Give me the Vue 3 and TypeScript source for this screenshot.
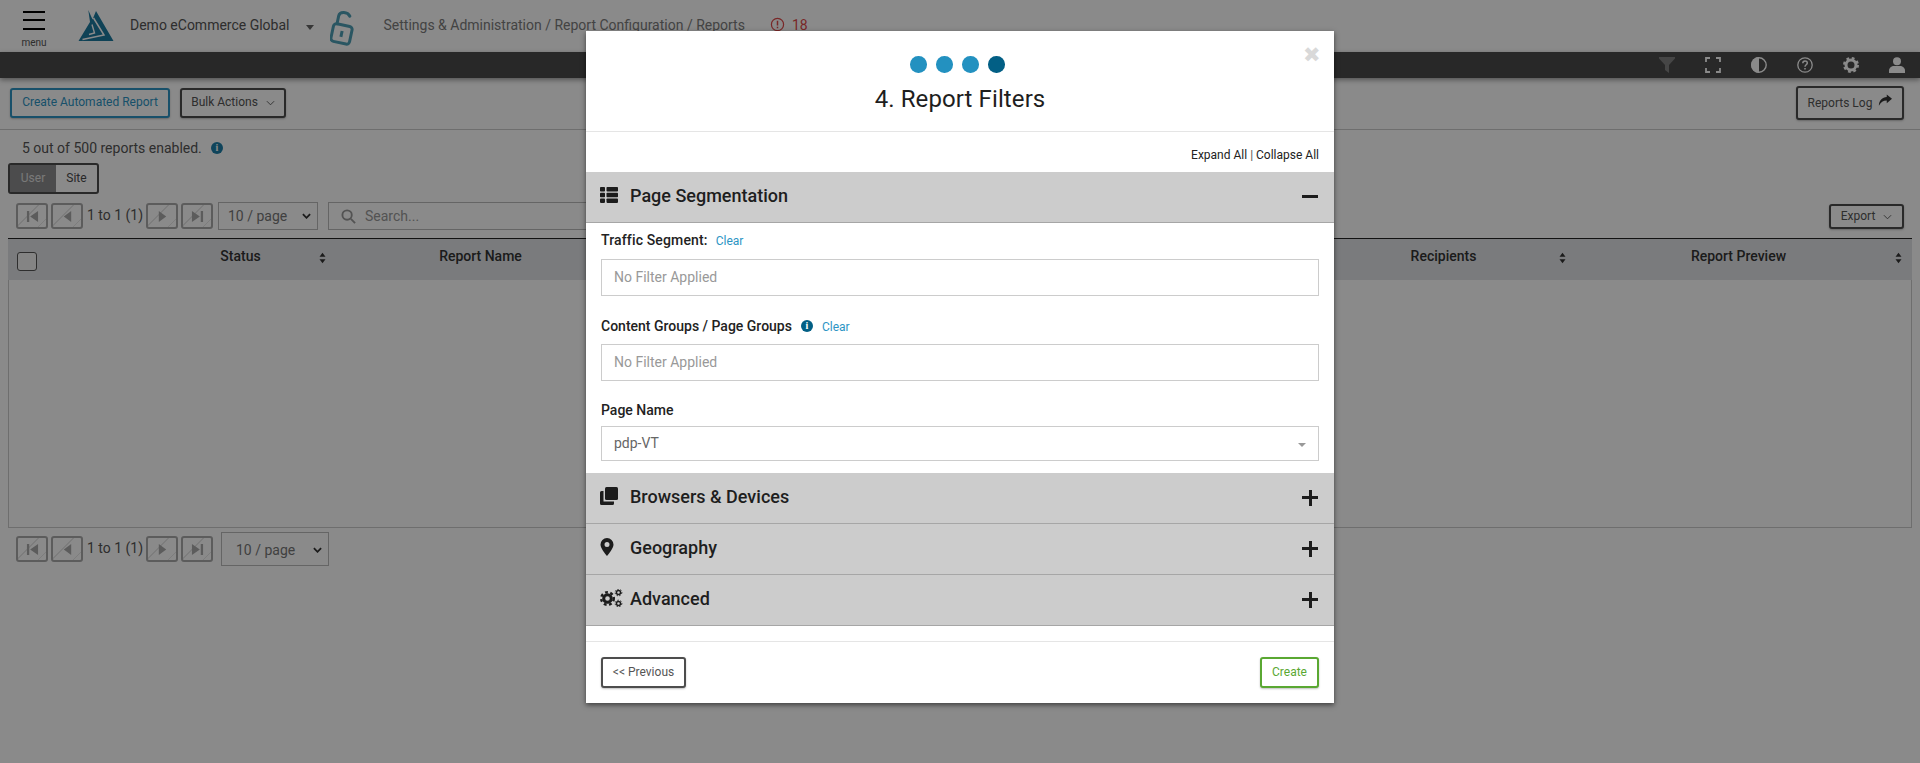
<script setup lang="ts">
interface Section {
  title: string
  icon: string
}

const steps: number[] = [1, 2, 3, 4]
const collapsed: Section[] = [
  { title: 'Browsers & Devices', icon: 'copy' },
  { title: 'Geography', icon: 'pin' },
  { title: 'Advanced', icon: 'cogs' },
]
</script>

<template>
  <div class="page">
    <header class="top">
      <div class="menu">
        <span class="bars"><i></i><i></i><i></i></span>
        <span class="menu-label">menu</span>
      </div>
      <svg class="logo" viewBox="78 10 36 33">
        <path fill="#1c7aa0" d="M88.300 11 92.500 20.500 96 12 113.500 42H78.500L90 23Z" />
        <path fill="none" stroke="#fff" stroke-width="1.500" d="M82.500 40.500 104 36 93.500 19" />
        <path fill="none" stroke="#fff" stroke-width="1.400" d="M92 25.500 94.500 34 89 35.500" />
      </svg>
      <span class="account">Demo eCommerce Global</span>
      <span class="caret"></span>
      <svg class="lock" viewBox="0 0 24 36" fill="none" stroke="#4f9fb6" stroke-width="3">
        <g transform="rotate(12 12 24)">
          <rect x="2" y="15" width="19" height="18" rx="3" />
          <path d="M5 15V7c0-5 8-6 11-2" stroke-linecap="round" />
          <path d="M11.500 21v6" />
        </g>
      </svg>
      <span class="crumbs">Settings &amp; Administration / Report Configuration / Reports</span>
      <svg class="alert" viewBox="0 0 16 16" fill="none" stroke="#e04848" stroke-width="1.300">
        <circle cx="8" cy="8" r="6.500" />
        <path d="M8 4v5M8 10.500v1.500" stroke-width="1.600" />
      </svg>
      <span class="alert-count">18</span>
    </header>

    <div class="darkbar">
      <svg class="tool tool-off" viewBox="0 0 16 16" fill="#9a9a9a"><path d="M0 0h16v1.500L10 8v8l-4-3V8L0 1.500Z" /></svg>
      <svg class="tool" viewBox="0 0 16 16" fill="none" stroke="#fff" stroke-width="1.800"><path d="M1 5V1h4M11 1h4v4M15 11v4h-4M5 15H1v-4" /></svg>
      <svg class="tool" viewBox="0 0 16 16"><circle cx="8" cy="8" r="7.200" fill="none" stroke="#fff" stroke-width="1.400" /><path fill="#fff" d="M8 0a8 8 0 0 0 0 16Z" /></svg>
      <svg class="tool" viewBox="0 0 16 16" fill="none" stroke="#fff"><circle cx="8" cy="8" r="7.200" stroke-width="1.300" /><path d="M5.800 6.200c0-3 4.500-3 4.500-.2 0 1.800-2.300 1.800-2.300 3.800M8 11v1.500" stroke-width="1.500" /></svg>
      <svg class="tool" viewBox="0 0 16 16"><circle cx="8" cy="8" r="5" fill="none" stroke="#fff" stroke-width="3" /><circle cx="8" cy="8" r="6.500" fill="none" stroke="#fff" stroke-width="3" stroke-dasharray="2.600 2.500" /></svg>
      <svg class="tool" viewBox="0 0 16 16" fill="#fff"><circle cx="8" cy="4.200" r="4" /><path d="M0 16v-2.500C0 11 2.500 9 5 9h6c2.500 0 5 2 5 4.500V16Z" /></svg>
    </div>

    <div class="toolbar">
      <button class="btn btn-blue" type="button">Create Automated Report</button>
      <button class="btn bulk" type="button">
        Bulk Actions
        <svg class="chev" viewBox="0 0 10 6"><path d="M1 1l4 4 4-4" /></svg>
      </button>
      <button class="btn log" type="button">
        Reports Log
        <svg class="share" viewBox="0 0 16 14" fill="#333"><path d="M10 0l6 5-6 5V7C6 7 3 9 1 13c0-6 4-9.500 9-10Z" /></svg>
      </button>
    </div>

    <p class="summary">
      5 out of 500 reports enabled.
      <span class="info">i</span>
    </p>

    <div class="toggle">
      <span class="toggle-on">User</span>
      <span>Site</span>
    </div>

    <div class="pager">
      <span class="nav"><svg viewBox="0 0 14 14"><path d="M1 1h2.500v12H1zM13 1v12L4.500 7Z" /></svg></span>
      <span class="nav"><svg viewBox="0 0 14 14"><path d="M11 1v12L3 7Z" /></svg></span>
      <span class="range">1 to 1 (1)</span>
      <span class="nav"><svg viewBox="0 0 14 14"><path d="M3 1v12l8-6Z" /></svg></span>
      <span class="nav"><svg viewBox="0 0 14 14"><path d="M13 1h-2.500v12H13zM1 1v12l8.500-6Z" /></svg></span>
      <span class="perpage">10 / page<svg class="chev-bold" viewBox="0 0 10 6"><path d="M1 1l4 4 4-4" /></svg></span>
      <span class="search">
        <svg viewBox="0 0 16 16" fill="none" stroke="#999" stroke-width="2"><circle cx="6.500" cy="6.500" r="5" /><path d="M10.500 10.500 15 15" /></svg>
        Search...
      </span>
      <button class="btn export" type="button">
        Export
        <svg class="chev" viewBox="0 0 10 6"><path d="M1 1l4 4 4-4" /></svg>
      </button>
    </div>

    <div class="table">
      <div class="thead">
        <div class="cell-check"><span class="check"></span></div>
        <div class="th"><span></span><b>Status</b><svg class="sort" viewBox="0 0 8 14"><path d="M4 1l3.500 4.500h-7zM4 13 .5 8.500h7z" /></svg></div>
        <div class="th"><span></span><b>Report Name</b><span></span></div>
        <div></div>
        <div class="th"><span></span><b>Recipients</b><svg class="sort" viewBox="0 0 8 14"><path d="M4 1l3.500 4.500h-7zM4 13 .5 8.500h7z" /></svg></div>
        <div class="th"><span></span><b>Report Preview</b><svg class="sort" viewBox="0 0 8 14"><path d="M4 1l3.500 4.500h-7zM4 13 .5 8.500h7z" /></svg></div>
      </div>
      <div class="tbody"></div>
    </div>

    <div class="pager pager-bottom">
      <span class="nav"><svg viewBox="0 0 14 14"><path d="M1 1h2.500v12H1zM13 1v12L4.500 7Z" /></svg></span>
      <span class="nav"><svg viewBox="0 0 14 14"><path d="M11 1v12L3 7Z" /></svg></span>
      <span class="range">1 to 1 (1)</span>
      <span class="nav"><svg viewBox="0 0 14 14"><path d="M3 1v12l8-6Z" /></svg></span>
      <span class="nav"><svg viewBox="0 0 14 14"><path d="M13 1h-2.500v12H13zM1 1v12l8.500-6Z" /></svg></span>
      <span class="perpage perpage-bottom">10 / page<svg class="chev-bold" viewBox="0 0 10 6"><path d="M1 1l4 4 4-4" /></svg></span>
    </div>

    <div class="overlay">
      <div class="modal">
        <div class="modal-head">
          <span class="close">&#10006;</span>
          <div class="dots">
            <span v-for="s in steps" :key="s" class="dot" :class="{ current: s === 4 }"></span>
          </div>
          <h2>4. Report Filters</h2>
        </div>

        <div class="expand"><span>Expand All</span> | <span>Collapse All</span></div>

        <div class="bar">
          <svg class="bar-icon" viewBox="0 0 18 16" fill="#1c1c1c">
            <rect x="0" y="0" width="5" height="4.500" rx=".8" /><rect x="6.500" y="0" width="11.500" height="4.500" rx=".8" />
            <rect x="0" y="5.700" width="5" height="4.500" rx=".8" /><rect x="6.500" y="5.700" width="11.500" height="4.500" rx=".8" />
            <rect x="0" y="11.400" width="5" height="4.500" rx=".8" /><rect x="6.500" y="11.400" width="11.500" height="4.500" rx=".8" />
          </svg>
          <span class="bar-title">Page Segmentation</span>
          <span class="minus"></span>
        </div>

        <div class="filters">
          <div class="label first"><b>Traffic Segment:</b><a class="clear">Clear</a></div>
          <div class="field placeholder">No Filter Applied</div>
          <div class="label"><b>Content Groups / Page Groups</b><span class="info small">i</span><a class="clear">Clear</a></div>
          <div class="field placeholder field-short">No Filter Applied</div>
          <div class="label label-name"><b>Page Name</b></div>
          <div class="field select">pdp-VT<span class="select-caret"></span></div>
        </div>

        <div v-for="sec in collapsed" :key="sec.title" class="bar">
          <svg v-if="sec.icon === 'copy'" class="bar-icon" viewBox="0 0 18 18" fill="#1c1c1c">
            <rect x="5" y="0" width="13" height="13" rx="1.500" />
            <path d="M3.500 4v10.500H14V16.500a1.500 1.500 0 0 1-1.500 1.500h-11A1.500 1.500 0 0 1 0 16.500V5.500A1.500 1.500 0 0 1 1.500 4Z" />
          </svg>
          <svg v-else-if="sec.icon === 'pin'" class="bar-icon pin" viewBox="0 0 14 18" fill="#1c1c1c">
            <path fill-rule="evenodd" d="M7 0a6.500 6.500 0 0 1 6.500 6.500C13.500 10 9 15.500 7 18 5 15.500.5 10 .5 6.500A6.500 6.500 0 0 1 7 0Zm0 4a2.500 2.500 0 1 0 0 5 2.500 2.500 0 0 0 0-5Z" />
          </svg>
          <svg v-else class="bar-icon cogs" viewBox="0 0 23 18" fill="none" stroke="#1c1c1c">
            <circle cx="7.500" cy="9.500" r="3.800" stroke-width="3" />
            <circle cx="7.500" cy="9.500" r="6.300" stroke-width="2.400" stroke-dasharray="2.800 2.500" />
            <circle cx="18.500" cy="3.500" r="2" stroke-width="1.400" />
            <circle cx="18.500" cy="3.500" r="3.300" stroke-width="1" stroke-dasharray="1.500 1.300" />
            <circle cx="18.500" cy="14.500" r="2" stroke-width="1.400" />
            <circle cx="18.500" cy="14.500" r="3.300" stroke-width="1" stroke-dasharray="1.500 1.300" />
          </svg>
          <span class="bar-title">{{ sec.title }}</span>
          <span class="plus"></span>
        </div>

        <div class="modal-foot">
          <button class="btn prev" type="button">&lt;&lt; Previous</button>
          <button class="btn create" type="button">Create</button>
        </div>
      </div>
    </div>
  </div>
</template>

<style>
html,
body {
  margin: 0;
  background: #fff;
}
</style>

<style scoped>
.page {
  position: relative;
  width: 1920px;
  height: 763px;
  overflow: hidden;
  background: #fff;
  font-family: Roboto, "Liberation Sans", sans-serif;
  font-size: 14px;
  color: #4a4a4a;
}

.top {
  display: flex;
  align-items: center;
  height: 52px;
}
.menu {
  display: flex;
  flex-direction: column;
  align-items: center;
  width: 34px;
  margin: 6px 0 0 17px;
}
.bars {
  display: flex;
  flex-direction: column;
  gap: 6.500px;
  width: 22px;
  margin-top: 1px;
}
.bars i {
  display: block;
  height: 2px;
  background: #000;
}
.menu-label {
  margin-top: 6px;
  font-size: 10px;
  line-height: 13px;
  color: #555;
}
.logo {
  width: 36px;
  height: 33px;
  margin: -1px 0 0 27px;
}
.account {
  margin: -3px 0 0 16px;
  font-size: 14px;
  color: #555;
}
.caret {
  width: 0;
  height: 0;
  margin: 3px 0 0 16px;
  border: 4px solid transparent;
  border-top: 5px solid #666;
  border-bottom: 0;
}
.lock {
  width: 24px;
  height: 36px;
  margin: 4px 0 0 16px;
}
.crumbs {
  margin: -3px 0 0 30px;
  font-size: 14px;
  color: #7c7c7c;
}
.alert {
  width: 15px;
  height: 15px;
  margin: -3px 0 0 25px;
}
.alert-count {
  margin: -3px 0 0 7px;
  font-size: 14px;
  color: #e04848;
}

.darkbar {
  display: flex;
  justify-content: flex-end;
  align-items: center;
  gap: 30px;
  height: 26px;
  padding-right: 15px;
  background: #4a4a4a;
  box-shadow: 0 2px 5px rgba(0, 0, 0, 0.4);
}
.tool {
  width: 16px;
  height: 16px;
}
.tool-off {
  opacity: 0.7;
}

.toolbar {
  display: flex;
  align-items: center;
  box-sizing: border-box;
  height: 52px;
  padding: 0 16px 2px 10px;
  border-bottom: 1px solid #ccc;
}
.btn {
  height: 30px;
  padding: 0 0 1px;
  border: 2px solid #4d4d4d;
  border-radius: 3px;
  background: #fff;
  font-family: inherit;
  font-size: 12px;
  color: #555;
  box-shadow: 0 1px 2px rgba(0, 0, 0, 0.25);
}
.btn-blue {
  width: 160px;
  border-color: #2d95c4;
  color: #2d95c4;
}
.bulk {
  width: 106px;
  margin-left: 10px;
}
.log {
  width: 108px;
  height: 34px;
  margin-left: auto;
}
.chev {
  width: 9px;
  height: 6px;
  margin-left: 5px;
  fill: none;
  stroke: #555;
  stroke-width: 1;
}
.share {
  width: 14px;
  height: 13px;
  margin-left: 3px;
}

.summary {
  display: flex;
  align-items: center;
  gap: 9px;
  height: 20px;
  margin: 8px 0 0 22px;
  font-size: 14px;
  color: #555;
}
.info {
  display: inline-flex;
  justify-content: center;
  align-items: center;
  width: 12px;
  height: 12px;
  border-radius: 50%;
  background: #1c7fa8;
  font-family: "Liberation Serif", serif;
  font-size: 10px;
  font-weight: 700;
  line-height: 1;
  color: #fff;
}

.toggle {
  display: flex;
  width: 91px;
  height: 31px;
  margin: 5px 0 0 8px;
  box-sizing: border-box;
  border: 2px solid #4d4d4d;
  border-radius: 3px;
  font-size: 12px;
  line-height: 27px;
  text-align: center;
}
.toggle span {
  flex: 1;
}
.toggle-on {
  flex: 0 0 46px !important;
  background: #8d8d8f;
  color: #e0e0e0;
}

.pager {
  display: flex;
  align-items: center;
  height: 28px;
  margin: 8px 16px 0;
}
.nav {
  display: flex;
  justify-content: center;
  align-items: center;
  box-sizing: border-box;
  width: 32px;
  height: 26px;
  margin-right: 3px;
  border: 2px solid #aaa;
  border-radius: 3px;
  background: repeating-linear-gradient(135deg, #fff 0 14px, #e8e8e8 14px 15px);
}
.nav svg {
  width: 13px;
  height: 13px;
  fill: #aaa;
}
.range {
  width: 59px;
  margin: -3px 0 0 1px;
  font-size: 14px;
  color: #555;
}
.perpage {
  display: flex;
  align-items: center;
  box-sizing: border-box;
  width: 100px;
  height: 28px;
  margin-left: 2px;
  padding-left: 9px;
  border: 1px solid #bbb;
  font-size: 14px;
  color: #777;
}
.chev-bold {
  width: 9px;
  height: 6px;
  margin-left: auto;
  margin-right: 6px;
  fill: none;
  stroke: #333;
  stroke-width: 2;
}
.search {
  display: flex;
  align-items: center;
  gap: 9px;
  box-sizing: border-box;
  width: 500px;
  height: 28px;
  margin-left: 10px;
  padding-left: 12px;
  border: 1px solid #bbb;
  color: #999;
}
.search svg {
  width: 15px;
  height: 15px;
}
.export {
  width: 75px;
  height: 25px;
  margin-left: auto;
}
.pager-bottom {
  height: 34px;
  margin-top: 4px;
}
.pager-bottom .range {
  margin-top: -2px;
}
.perpage-bottom {
  width: 108px;
  height: 34px;
  margin-left: 5px;
  padding: 2px 0 0 14px;
}

.table {
  margin: 8px 8px 0;
}
.thead {
  display: grid;
  grid-template-columns: 143px 180px 300px 686px 254px 336px;
  align-items: center;
  box-sizing: border-box;
  height: 42px;
  padding-right: 5px;
  border-top: 1px solid #222;
  background: #e2e4e8;
}
.cell-check {
  padding-left: 9px;
}
.check {
  display: block;
  box-sizing: border-box;
  width: 20px;
  height: 19px;
  margin-top: 3px;
  border: 1px solid #555;
  border-radius: 3px;
  background: #f4f4f4;
}
.th {
  display: grid;
  grid-template-columns: 1fr auto 1fr;
  align-items: center;
  padding: 0 5px 0 4px;
  margin-top: -7px;
  font-size: 14px;
}
.th b {
  font-weight: 500;
  color: #333;
}
.sort {
  justify-self: end;
  width: 7px;
  height: 12px;
  margin-top: 3px;
  fill: #333;
}
.tbody {
  box-sizing: border-box;
  height: 248px;
  border: 1px solid #ccc;
  border-top: 0;
}

.overlay {
  position: absolute;
  inset: 0;
  display: flex;
  justify-content: center;
  align-items: flex-start;
  padding-top: 31px;
  background: rgba(0, 0, 0, 0.46);
}
.modal {
  position: relative;
  width: 748px;
  background: #fff;
  box-shadow: 0 2px 5px rgba(0, 0, 0, 0.55);
  color: #222;
}
.modal-head {
  box-sizing: border-box;
  height: 101px;
  padding-top: 25px;
  border-bottom: 1px solid #e5e5e5;
  text-align: center;
}
.close {
  position: absolute;
  top: 12px;
  right: 13px;
  font-size: 21px;
  line-height: 24px;
  color: #d9d9d9;
}
.dots {
  display: flex;
  justify-content: center;
  gap: 9.500px;
  padding-right: 5px;
}
.dot {
  width: 16.500px;
  height: 16.500px;
  border-radius: 50%;
  background: #2391c0;
}
.dot.current {
  background: #025f85;
}
h2 {
  margin: 12px 0 0;
  font-size: 24px;
  font-weight: 400;
  line-height: 28px;
  letter-spacing: 0.1px;
  color: #1e1e1e;
}
.expand {
  height: 40px;
  padding-right: 15px;
  box-sizing: border-box;
  padding-top: 16px;
  font-size: 12px;
  line-height: 15px;
  text-align: right;
  color: #555;
}
.expand span {
  color: #222;
}
.bar {
  display: flex;
  align-items: center;
  box-sizing: border-box;
  height: 51px;
  padding: 0 16px 4px 14px;
  border-bottom: 1px solid #a6a6a6;
  background: #ccc;
}
.bar-icon {
  width: 18px;
  height: 18px;
}
.bar-icon.pin {
  width: 14px;
  margin-right: 4px;
}
.bar-icon.cogs {
  width: 23px;
  margin-right: -5px;
}
.bar-title {
  margin-left: 12px;
  font-size: 18px;
  font-weight: 500;
  color: #1e1e1e;
}
.minus,
.plus {
  position: relative;
  width: 16px;
  height: 3px;
  margin: 3px 0 0 auto;
  background: #1c1c1c;
}
.plus::after {
  content: "";
  position: absolute;
  top: -6.500px;
  left: 6.500px;
  width: 3px;
  height: 16px;
  background: #1c1c1c;
}
.filters {
  box-sizing: border-box;
  height: 250px;
  padding: 7px 15px 0;
}
.label {
  display: flex;
  align-items: center;
  height: 20px;
  margin-top: 20px;
  font-size: 14px;
}
.label.first {
  margin-top: 0;
}
.label.label-name {
  margin-top: 19px;
}
.label b {
  font-weight: 500;
  color: #222;
}
.label.first b {
  letter-spacing: 0.15px;
}
.clear {
  margin: 2px 0 0 8px;
  font-size: 12px;
  color: #2d95c4;
}
.info.small {
  margin-left: 9px;
  background: #025f85;
}
.info.small + .clear {
  margin-left: 9px;
}
.field {
  display: flex;
  align-items: center;
  box-sizing: border-box;
  height: 37px;
  margin-top: 9px;
  padding: 0 0 2px 12px;
  border: 1px solid #ccc;
  font-size: 14px;
}
.field-short {
  margin-top: 8px;
}
.placeholder {
  color: #999;
}
.select {
  height: 35px;
  margin-top: 6px;
  color: #666;
}
.select-caret {
  width: 0;
  height: 0;
  margin: 4px 12px 0 auto;
  border: 4px solid transparent;
  border-top: 4px solid #999;
  border-bottom: 0;
}
.modal-foot {
  display: flex;
  justify-content: space-between;
  margin-top: 15px;
  padding: 15px 15px;
  border-top: 1px solid #e5e5e5;
}
.prev {
  width: 85px;
  height: 31px;
  padding-bottom: 2px;
}
.create {
  width: 59px;
  height: 31px;
  padding-bottom: 2px;
  border-color: #5aa832;
  color: #5aa832;
}
</style>
